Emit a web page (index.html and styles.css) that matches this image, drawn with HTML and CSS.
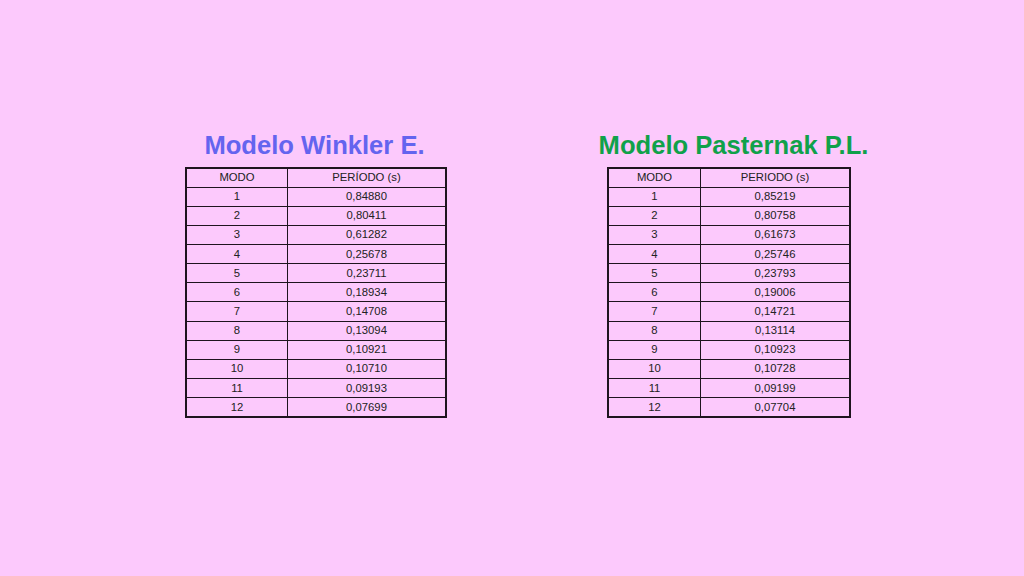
FILE: index.html
```html
<!DOCTYPE html>
<html lang="es">
<head>
<meta charset="utf-8">
<title>Modelos</title>
<link rel="stylesheet" href="styles.css">
</head>
<body>
<div class="page">
  <section class="block block-w">
    <h1 class="title title-blue">Modelo Winkler E.</h1>
    <table class="grid">
      <tr><td class="c1">MODO</td><td>PERÍODO (s)</td></tr>
      <tr><td class="c1">1</td><td>0,84880</td></tr>
      <tr><td class="c1">2</td><td>0,80411</td></tr>
      <tr><td class="c1">3</td><td>0,61282</td></tr>
      <tr><td class="c1">4</td><td>0,25678</td></tr>
      <tr><td class="c1">5</td><td>0,23711</td></tr>
      <tr><td class="c1">6</td><td>0,18934</td></tr>
      <tr><td class="c1">7</td><td>0,14708</td></tr>
      <tr><td class="c1">8</td><td>0,13094</td></tr>
      <tr><td class="c1">9</td><td>0,10921</td></tr>
      <tr><td class="c1">10</td><td>0,10710</td></tr>
      <tr><td class="c1">11</td><td>0,09193</td></tr>
      <tr><td class="c1">12</td><td>0,07699</td></tr>
    </table>
  </section>
  <section class="block block-p">
    <h1 class="title title-green">Modelo Pasternak P.L.</h1>
    <table class="grid">
      <tr><td class="c1">MODO</td><td>PERIODO (s)</td></tr>
      <tr><td class="c1">1</td><td>0,85219</td></tr>
      <tr><td class="c1">2</td><td>0,80758</td></tr>
      <tr><td class="c1">3</td><td>0,61673</td></tr>
      <tr><td class="c1">4</td><td>0,25746</td></tr>
      <tr><td class="c1">5</td><td>0,23793</td></tr>
      <tr><td class="c1">6</td><td>0,19006</td></tr>
      <tr><td class="c1">7</td><td>0,14721</td></tr>
      <tr><td class="c1">8</td><td>0,13114</td></tr>
      <tr><td class="c1">9</td><td>0,10923</td></tr>
      <tr><td class="c1">10</td><td>0,10728</td></tr>
      <tr><td class="c1">11</td><td>0,09199</td></tr>
      <tr><td class="c1">12</td><td>0,07704</td></tr>
    </table>
  </section>
</div>
</body>
</html>
```
FILE: styles.css
```css
html, body {
  margin: 0;
  padding: 0;
  width: 1024px;
  height: 576px;
  background: #fcc9fc;
  overflow: hidden;
}

.page {
  display: flex;
  align-items: flex-start;
  gap: 160px;
  padding-left: 185px;
  padding-top: 130px;
  font-family: "Liberation Sans", Arial, sans-serif;
}

.block {
  display: flex;
  flex-direction: column;
  align-items: center;
}

.block-w { width: 262px; }
.block-p { width: 244px; }

.title {
  margin: 0 0 7px 0;
  font-size: 25.6px;
  line-height: 30px;
  font-weight: bold;
  white-space: nowrap;
}

.title-blue { color: #6464ef; padding-right: 3px; }
.title-green { color: #10a14a; padding-left: 9px; }

.grid {
  width: 100%;
  border-collapse: collapse;
  border: 2px solid #1e141e;
  font-size: 11.3px;
  color: #222;
}

.grid tr { height: 19.15px; }

.grid td {
  border: 1px solid #1e141e;
  padding: 0;
  text-align: center;
  line-height: 13px;
}

.block-w .c1 { width: 100px; }
.block-p .c1 { width: 91px; }
```
